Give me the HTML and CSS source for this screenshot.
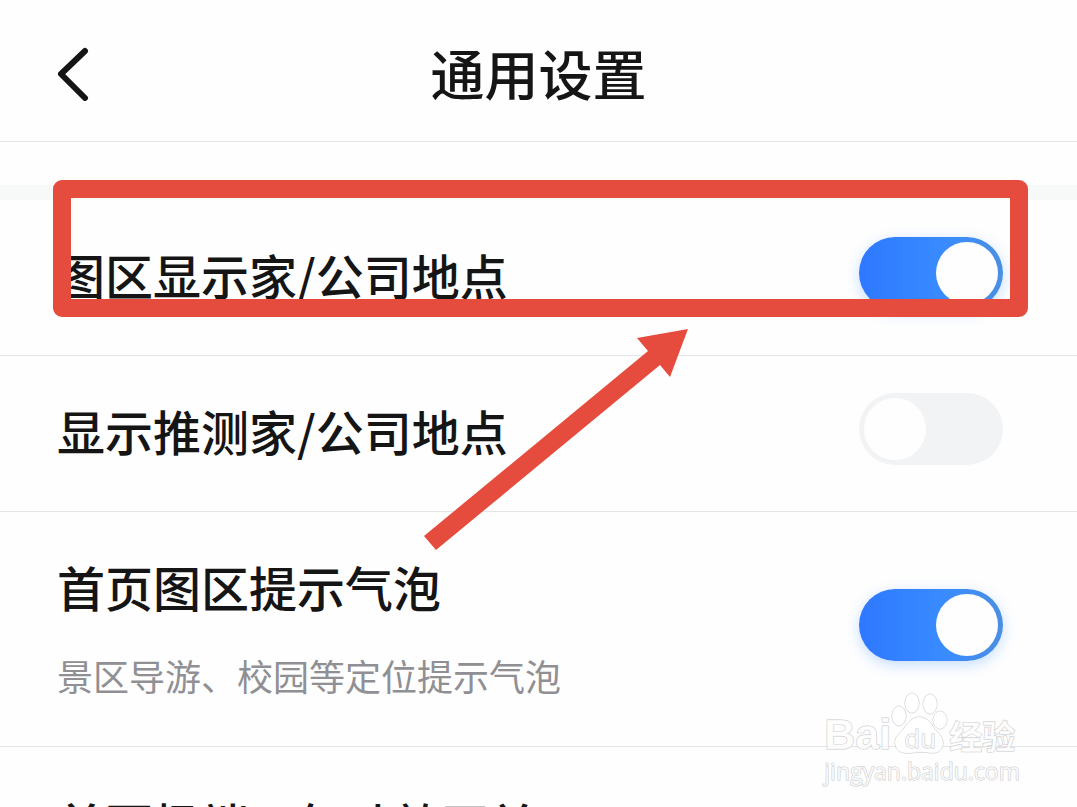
FILE: index.html
```
<!DOCTYPE html>
<html lang="zh-CN">
<head>
    <meta charset="UTF-8">
    <meta name="viewport" content="width=device-width, initial-scale=1.0">
    <title>通用设置</title>
    <link rel="stylesheet" href="styles.css">
</head>
<body>
    <div class="page">
        <header class="header">
            <button class="back" type="button" aria-label="返回">
                <svg width="34" height="56" viewBox="0 0 34 56">
                    <path d="M29 6 L5 29 L29 53" fill="none" stroke="#151515" stroke-width="6" stroke-linecap="round" stroke-linejoin="round"/>
                </svg>
            </button>
            <h1>通用设置</h1>
        </header>

        <main class="settings">
            <div class="row">
                <label class="name" for="home">图区显示家/公司地点</label>
                <input class="switch" type="checkbox" id="home" checked>
                <div class="highlight"></div>
            </div>
            <div class="row">
                <label class="name" for="guess">显示推测家/公司地点</label>
                <input class="switch" type="checkbox" id="guess">
            </div>
            <div class="row">
                <div class="text">
                    <label class="name" for="bubble">首页图区提示气泡</label>
                    <p class="desc">景区导游、校园等定位提示气泡</p>
                </div>
                <input class="switch" type="checkbox" id="bubble" checked>
            </div>
            <div class="row tall">
                <label class="name" for="weather">首页极端天气动效开关</label>
                <input class="switch" type="checkbox" id="weather" checked>
            </div>
        </main>

        <svg class="arrow" width="264" height="221" viewBox="0 0 264 221">
            <path d="M264 0 L213 9 L224 22 L0 207 L12 221 L236 36 L246 48 Z" fill="#e64c3d"/>
        </svg>

        <div class="watermark">
            <div class="brand">
                <span class="bai">Bai</span>
                <span class="paw">
                    <svg width="58" height="64" viewBox="0 0 58 64" fill="#fff" fill-opacity="0.8" stroke="#cacaca">
                        <ellipse cx="8" cy="24" rx="7" ry="10"/>
                        <ellipse cx="21" cy="11" rx="7" ry="10"/>
                        <ellipse cx="39" cy="12" rx="7" ry="10"/>
                        <ellipse cx="49" cy="28" rx="7" ry="9"/>
                        <path d="M28 25 C36 25 40 31 43 36 C47 41 52 44 52 51 C52 57 48 61 42 61 C37 61 33 60 28 60 C23 60 19 62 14 61 C7 60 4 56 4 50 C4 44 10 41 13 36 C17 31 21 25 28 25 Z"/>
                    </svg>
                    <span class="du">du</span>
                </span>
                <span class="exp">经验</span>
            </div>
            <div class="site">jingyan.baidu.com</div>
        </div>
    </div>
</body>
</html>
```
FILE: styles.css
```
* {
    box-sizing: border-box;
}
body {
    margin: 0;
    background-color: #fefefe;
    color: #151515;
    font-family: "Noto Sans CJK SC", sans-serif;
}
.page {
    position: relative;
    height: 100vh;
    overflow: hidden;
}
.header {
    display: grid;
    grid-template-columns: 1fr auto 1fr;
    align-items: center;
    padding: 33px 56px 28px;
    border-bottom: 1px solid #e4e6e6;
}
.back {
    display: flex;
    justify-self: start;
    padding: 0;
    border: none;
    background: none;
    cursor: pointer;
}
h1 {
    margin: 0;
    font-size: 54px;
    line-height: 80px;
    font-weight: 500;
}
.settings {
    margin-top: 43px;
    border-top: 15px solid #f7f8f8;
}
.row {
    position: relative;
    display: flex;
    align-items: center;
    justify-content: space-between;
    padding: 38px 74px 45px 57px;
    border-bottom: 1px solid #e2e6e8;
}
.tall {
    min-height: 235px;
    padding-top: 40px;
}
.tall .name {
    align-self: flex-start;
}
.name {
    display: block;
    font-size: 48px;
    line-height: 72px;
    font-weight: 500;
}
.desc {
    margin: 27px 0 0;
    font-size: 36px;
    line-height: 52px;
    color: #909094;
}
.switch {
    appearance: none;
    flex: none;
    width: 144px;
    height: 72px;
    margin: -2px 0 0;
    padding: 5px;
    border-radius: 36px;
    background-color: #f2f3f5;
    cursor: pointer;
}
.switch::before {
    content: "";
    display: block;
    width: 62px;
    height: 62px;
    border-radius: 50%;
    background-color: #fefefe;
}
.switch:checked {
    background: linear-gradient(to right, #2e78ff, #388aff 55%, #4a8fe2);
    box-shadow: 0 4px 14px rgba(70, 150, 255, 0.3);
}
.switch:checked::before {
    margin-left: auto;
}
.highlight {
    position: absolute;
    z-index: 1;
    top: -20px;
    right: 49px;
    bottom: 38px;
    left: 53px;
    border: 18px solid #e64c3d;
    border-radius: 9px;
    pointer-events: none;
}
.arrow {
    position: absolute;
    top: 329px;
    left: 424px;
    pointer-events: none;
}
.watermark {
    position: absolute;
    right: 57px;
    bottom: 21px;
    color: rgba(255, 255, 255, 0.8);
    font-family: "Open Sans", sans-serif;
    -webkit-text-stroke: 1px #cacaca;
    paint-order: stroke;
    pointer-events: none;
}
.brand {
    display: flex;
    align-items: flex-end;
    height: 64px;
}
.bai {
    font-family: "Liberation Sans", sans-serif;
    font-size: 43px;
    line-height: 44px;
    font-weight: bold;
}
.paw {
    position: relative;
    display: flex;
}
.du {
    position: absolute;
    right: 0;
    bottom: 4px;
    left: 0;
    font-size: 26px;
    line-height: 28px;
    text-align: center;
}
.exp {
    margin-bottom: 5px;
    font-family: "Noto Sans CJK SC", sans-serif;
    font-size: 33px;
    line-height: 32px;
    font-weight: bold;
}
.site {
    font-size: 23px;
    line-height: 30px;
}
```
